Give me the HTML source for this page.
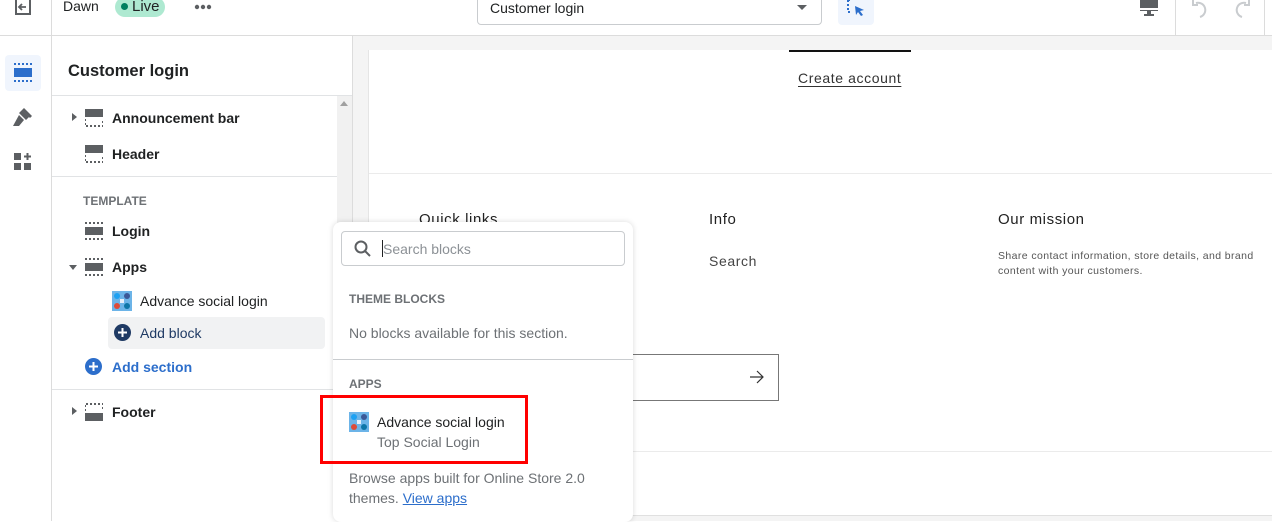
<!DOCTYPE html>
<html><head><style>
*{box-sizing:border-box;margin:0;padding:0}
body{width:1272px;height:521px;overflow:hidden;background:#fff;font-family:"Liberation Sans",sans-serif;position:relative;color:#202223}
.a{position:absolute}
.t{font-size:14px}
.b{font-weight:bold}
</style></head><body>
<div class="a" style="left:0;top:0;width:1272px;height:36px;border-bottom:1px solid #dcdcdc;background:#fff"></div>
<div class="a" style="left:51px;top:0;width:1px;height:36px;background:#dcdcdc"></div>
<svg class="a" style="left:14px;top:0" width="18" height="16"><path d="M2 0v14h14V0" fill="none" stroke="#5c5f62" stroke-width="2"/><path d="M12 7H5M8 4L5 7l3 3" fill="none" stroke="#5c5f62" stroke-width="1.8"/></svg>
<div class="a t" style="left:63px;top:-2px;color:#202223">Dawn</div>
<div class="a" style="left:115px;top:-3px;width:50px;height:20px;border-radius:10px;background:#aee9d1"></div>
<div class="a" style="left:121px;top:3px;width:7px;height:7px;border-radius:50%;background:#007f5f"></div>
<div class="a" style="left:132px;top:-2px;font-size:15px">Live</div>
<svg class="a" style="left:194px;top:4px" width="18" height="6"><circle cx="3" cy="3" r="2.2" fill="#5c5f62"/><circle cx="9" cy="3" r="2.2" fill="#5c5f62"/><circle cx="15" cy="3" r="2.2" fill="#5c5f62"/></svg>
<div class="a" style="left:477px;top:-6px;width:345px;height:31px;border:1px solid #c9cccf;border-radius:4px"></div>
<div class="a t" style="left:490px;top:0px">Customer login</div>
<div class="a" style="left:797px;top:5px;border-left:5px solid transparent;border-right:5px solid transparent;border-top:5px solid #5c5f62"></div>
<div class="a" style="left:838px;top:-5px;width:36px;height:30px;background:#f0f5fd;border-radius:4px"></div>
<svg class="a" style="left:846px;top:0" width="22" height="18"><path d="M2 0v12h4M2 0h4" fill="none" stroke="#2c6ecb" stroke-width="2" stroke-dasharray="2 2"/><path d="M9 6l9 4-4 1 3 4-2 1-3-4-2 3z" fill="#2c6ecb"/></svg>
<svg class="a" style="left:1139px;top:0" width="20" height="18"><rect x="1" y="0" width="18" height="11" fill="#5c5f62"/><rect x="0" y="8" width="20" height="2" fill="#fff"/><rect x="8" y="11" width="4" height="3" fill="#5c5f62"/><rect x="5" y="14" width="10" height="2" fill="#5c5f62"/></svg>
<div class="a" style="left:1175px;top:0;width:1px;height:36px;background:#dcdcdc"></div>
<div class="a" style="left:1264px;top:0;width:1px;height:36px;background:#dcdcdc"></div>
<svg class="a" style="left:1190px;top:0" width="66" height="20"><path d="M6 3a6.5 6.5 0 1 1 4 14" fill="none" stroke="#c9cccf" stroke-width="2"/><path d="M3 0v5h5" fill="none" stroke="#c9cccf" stroke-width="2"/><path d="M56 3a6.5 6.5 0 1 0 -4 14" fill="none" stroke="#c9cccf" stroke-width="2"/><path d="M59 0v5h-5" fill="none" stroke="#c9cccf" stroke-width="2"/></svg>
<div class="a" style="left:51px;top:36px;width:1px;height:485px;background:#dcdcdc"></div>
<div class="a" style="left:5px;top:55px;width:36px;height:36px;background:#f0f5fd;border-radius:4px"></div>
<svg class="a" style="left:13px;top:63px" width="20" height="20"><path d="M1 1h18" stroke="#2c6ecb" stroke-width="2" stroke-dasharray="2 2"/><rect x="1" y="5" width="18" height="9" fill="#2c6ecb"/><path d="M1 18h18" stroke="#2c6ecb" stroke-width="2" stroke-dasharray="2 2"/></svg>
<svg class="a" style="left:12px;top:108px" width="22" height="20"><path d="M10 2l7 7-3 3-7-7zM12 0l8 8-2 2-8-8z" fill="#5c5f62"/><path d="M7 7l5 5-5 6H1z" fill="#5c5f62"/></svg>
<svg class="a" style="left:13px;top:152px" width="20" height="20"><rect x="1" y="1" width="7" height="7" fill="#5c5f62"/><rect x="1" y="11" width="7" height="7" fill="#5c5f62"/><rect x="11" y="11" width="7" height="7" fill="#5c5f62"/><path d="M14.5 1v7M11 4.5h7" stroke="#5c5f62" stroke-width="2"/></svg>
<div class="a" style="left:352px;top:36px;width:1px;height:485px;background:#dcdcdc"></div>
<div class="a b" style="left:68px;top:62px;font-size:16.5px">Customer login</div>
<div class="a" style="left:52px;top:95px;width:300px;height:1px;background:#e1e3e5"></div>
<div class="a" style="left:337px;top:96px;width:15px;height:425px;background:#f1f1f1"></div>
<div class="a" style="left:340px;top:101px;border-left:4px solid transparent;border-right:4px solid transparent;border-bottom:5px solid #a0a0a0"></div>
<div class="a" style="left:52px;top:176px;width:285px;height:1px;background:#e1e3e5"></div>
<div class="a" style="left:52px;top:389px;width:285px;height:1px;background:#e1e3e5"></div>
<svg width="0" height="0" style="position:absolute"><defs>
<g id="sec"><rect x="0" y="0" width="18" height="8" fill="#5c5f62"/><path d="M0 10v7h18v-7" fill="none" stroke="#5c5f62" stroke-width="2" stroke-dasharray="2 2"/></g>
<g id="mid"><path d="M0 1h18M0 17h18" stroke="#5c5f62" stroke-width="2" stroke-dasharray="2 2"/><rect x="0" y="5" width="18" height="8" fill="#5c5f62"/></g>
<g id="ftr"><path d="M0 8V1h18v7" fill="none" stroke="#5c5f62" stroke-width="2" stroke-dasharray="2 2"/><rect x="0" y="10" width="18" height="8" fill="#5c5f62"/></g>
<g id="app"><rect width="20" height="20" fill="#6cb4e8"/><circle cx="5" cy="5" r="3" fill="#1da1f2"/><circle cx="15" cy="5" r="3" fill="#3b5998"/><circle cx="5" cy="15" r="3" fill="#dd4b39"/><circle cx="15" cy="15" r="3" fill="#0e76a8"/><rect x="8" y="8" width="4" height="4" fill="#e8f0fa"/></g>
</defs></svg>
<div class="a" style="left:72px;top:113px;border-top:4px solid transparent;border-bottom:4px solid transparent;border-left:5px solid #5c5f62"></div>
<svg class="a" style="left:85px;top:109px" width="18" height="19"><use href="#sec"/></svg>
<div class="a t b" style="left:112px;top:110px">Announcement bar</div>
<svg class="a" style="left:85px;top:145px" width="18" height="19"><use href="#sec"/></svg>
<div class="a t b" style="left:112px;top:146px">Header</div>
<div class="a b" style="left:83px;top:194px;font-size:12px;color:#6d7175">TEMPLATE</div>
<svg class="a" style="left:85px;top:222px" width="18" height="19"><use href="#mid"/></svg>
<div class="a t b" style="left:112px;top:223px">Login</div>
<div class="a" style="left:69px;top:265px;border-left:4px solid transparent;border-right:4px solid transparent;border-top:5px solid #5c5f62"></div>
<svg class="a" style="left:85px;top:258px" width="18" height="19"><use href="#mid"/></svg>
<div class="a t b" style="left:112px;top:259px">Apps</div>
<svg class="a" style="left:112px;top:291px" width="20" height="20"><use href="#app"/></svg>
<div class="a t" style="left:140px;top:293px">Advance social login</div>
<div class="a" style="left:108px;top:317px;width:217px;height:32px;background:#f1f2f3;border-radius:4px"></div>
<svg class="a" style="left:114px;top:324px" width="17" height="17"><circle cx="8.5" cy="8.5" r="8.5" fill="#1f3a64"/><path d="M8.5 4v9M4 8.5h9" stroke="#fff" stroke-width="2"/></svg>
<div class="a t" style="left:140px;top:325px;color:#1f3a64">Add block</div>
<svg class="a" style="left:85px;top:358px" width="17" height="17"><circle cx="8.5" cy="8.5" r="8.5" fill="#2c6ecb"/><path d="M8.5 4v9M4 8.5h9" stroke="#fff" stroke-width="2"/></svg>
<div class="a t b" style="left:112px;top:359px;color:#2c6ecb">Add section</div>
<div class="a" style="left:72px;top:407px;border-top:4px solid transparent;border-bottom:4px solid transparent;border-left:5px solid #5c5f62"></div>
<svg class="a" style="left:85px;top:403px" width="18" height="19"><use href="#ftr"/></svg>
<div class="a t b" style="left:112px;top:404px">Footer</div>
<div class="a" style="left:353px;top:36px;width:919px;height:485px;background:#f4f4f4"></div>
<div class="a" style="left:368px;top:50px;width:904px;height:466px;background:#fff;border-left:1px solid #e5e5e5;border-bottom:1px solid #e0e0e0"></div>
<div class="a" style="left:789px;top:50px;width:122px;height:2px;background:#121212"></div>
<div class="a t" style="left:798px;top:70px;color:#333;letter-spacing:0.6px;text-decoration:underline;text-underline-offset:3px">Create account</div>
<div class="a" style="left:369px;top:173px;width:903px;height:1px;background:#ebebeb"></div>
<div class="a" style="left:419px;top:211px;font-size:15px;letter-spacing:0.6px;color:#222">Quick links</div>
<div class="a" style="left:709px;top:211px;font-size:15px;letter-spacing:0.6px;color:#222">Info</div>
<div class="a" style="left:998px;top:211px;font-size:15px;letter-spacing:0.6px;color:#222">Our mission</div>
<div class="a t" style="left:709px;top:253px;color:#444;letter-spacing:0.6px">Search</div>
<div class="a" style="left:998px;top:249px;font-size:10.5px;line-height:15px;color:#555;letter-spacing:0.4px">Share contact information, store details, and brand<br>content with your customers.</div>
<div class="a" style="left:600px;top:354px;width:179px;height:47px;border:1px solid #777"></div>
<svg class="a" style="left:749px;top:370px" width="16" height="14"><path d="M1 7h13M8 1l6 6-6 6" fill="none" stroke="#333" stroke-width="1.2"/></svg>
<div class="a" style="left:369px;top:451px;width:903px;height:1px;background:#ebebeb"></div>
<div class="a" style="left:333px;top:222px;width:300px;height:300px;background:#fff;border-radius:8px;box-shadow:0 0 6px rgba(0,0,0,.15)"></div>
<div class="a" style="left:341px;top:231px;width:284px;height:35px;border:1px solid #c9cccf;border-radius:4px"></div>
<svg class="a" style="left:354px;top:240px" width="18" height="18"><circle cx="7" cy="7" r="5.5" fill="none" stroke="#5c5f62" stroke-width="2"/><path d="M11 11l5 5" stroke="#5c5f62" stroke-width="2"/></svg>
<div class="a" style="left:382px;top:240px;width:1px;height:17px;background:#202223"></div>
<div class="a t" style="left:383px;top:241px;color:#8c9196">Search blocks</div>
<div class="a b" style="left:349px;top:292px;font-size:12px;color:#6d7175">THEME BLOCKS</div>
<div class="a t" style="left:349px;top:325px;color:#6d7175">No blocks available for this section.</div>
<div class="a" style="left:333px;top:359px;width:300px;height:1px;background:#c9cccf"></div>
<div class="a b" style="left:349px;top:377px;font-size:12px;color:#6d7175">APPS</div>
<div class="a" style="left:320px;top:395px;width:208px;height:69px;border:3px solid #f00"></div>
<svg class="a" style="left:349px;top:412px" width="20" height="20"><use href="#app"/></svg>
<div class="a t" style="left:377px;top:414px">Advance social login</div>
<div class="a t" style="left:377px;top:434px;color:#6d7175">Top Social Login</div>
<div class="a t" style="left:349px;top:468px;color:#6d7175;line-height:20px">Browse apps built for Online Store 2.0<br>themes. <span style="color:#2c6ecb;text-decoration:underline">View apps</span></div>
</body></html>
